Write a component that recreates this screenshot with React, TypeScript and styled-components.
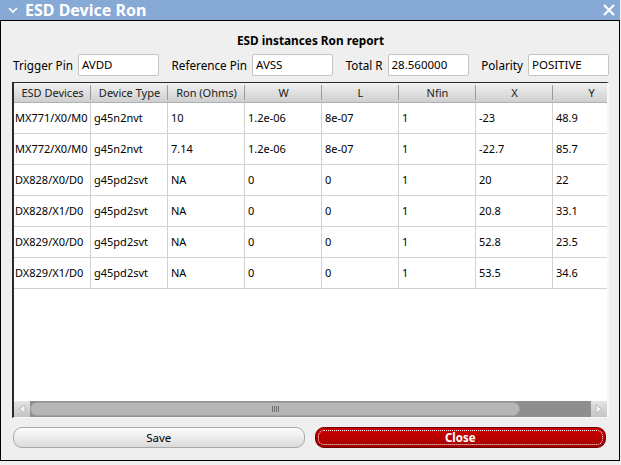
import styled, { createGlobalStyle } from "styled-components";

const GlobalStyle = createGlobalStyle`
  html, body {
    margin: 0;
    padding: 0;
    background: #efefef;
  }
  body {
    font-family: "Noto Sans", "Open Sans", "DejaVu Sans", sans-serif;
    font-size: 11px;
    color: #000;
  }
`;

interface Field {
  label: string;
  value: string;
}

const fields: Field[] = [
  { label: "Trigger Pin", value: "AVDD" },
  { label: "Reference Pin", value: "AVSS" },
  { label: "Total R", value: "28.560000" },
  { label: "Polarity", value: "POSITIVE" },
];

const columns = ["ESD Devices", "Device Type", "Ron (Ohms)", "W", "L", "Nfin", "X", "Y"];

const rows: string[][] = [
  ["MX771/X0/M0", "g45n2nvt", "10", "1.2e-06", "8e-07", "1", "-23", "48.9"],
  ["MX772/X0/M0", "g45n2nvt", "7.14", "1.2e-06", "8e-07", "1", "-22.7", "85.7"],
  ["DX828/X0/D0", "g45pd2svt", "NA", "0", "0", "1", "20", "22"],
  ["DX828/X1/D0", "g45pd2svt", "NA", "0", "0", "1", "20.8", "33.1"],
  ["DX829/X0/D0", "g45pd2svt", "NA", "0", "0", "1", "52.8", "23.5"],
  ["DX829/X1/D0", "g45pd2svt", "NA", "0", "0", "1", "53.5", "34.6"],
];

const Window = styled.div`
  width: 620px;
  height: 465px;
  display: flex;
  flex-direction: column;
`;

const TitleBar = styled.div`
  height: 20px;
  background: #87a9d6;
  border-bottom: 1px solid #000;
  display: flex;
  align-items: center;
  padding: 0 5px 0 8px;
  color: #fff;
`;

const Title = styled.span`
  flex: 1;
  margin-left: 7px;
  font-size: 16px;
  font-weight: bold;
  line-height: 20px;
`;

const Body = styled.div`
  flex: 1;
  display: flex;
  flex-direction: column;
  border-left: 1px solid #000;
  border-right: 1px solid #000;
  border-bottom: 1px solid #000;
  margin-bottom: 4px;
  padding: 12px 10px 12px 11px;
`;

const Heading = styled.div`
  text-align: center;
  font-size: 11.8px;
  font-weight: bold;
  line-height: 14px;
  height: 14px;
`;

const FieldRow = styled.div`
  display: flex;
  justify-content: space-between;
  margin: 7px 0 6px 1px;
  font-size: 11.7px;
`;

const FieldGroup = styled.label`
  display: flex;
  align-items: center;
  gap: 5px;
`;

const Input = styled.div`
  width: 76px;
  height: 20px;
  border: 1px solid #c4c4c4;
  border-radius: 2px;
  background: #fff;
  line-height: 20px;
  padding-left: 3px;
  font-size: 11.5px;
  box-sizing: content-box;
`;

const TableFrame = styled.div`
  width: 593px;
  height: 334px;
  display: flex;
  flex-direction: column;
  border-top: 1px solid #2a2a2a;
  border-left: 2px solid #2a2a2a;
  border-right: 2px solid #f8f8f8;
  border-bottom: 1px solid #f8f8f8;
`;

const Viewport = styled.div`
  flex: 1;
  overflow: hidden;
  background: #fff;
`;

const Grid = styled.div`
  display: grid;
  grid-template-columns: repeat(${columns.length}, 77px);
  width: ${columns.length * 77}px;
`;

const HeaderCell = styled.div`
  position: relative;
  height: 19px;
  line-height: 19px;
  text-align: center;
  color: #1a1a1a;
  background: linear-gradient(#f1f1f1, #cfcfcf);
  border-bottom: 1px solid #b0b0b0;
  &::after {
    content: "";
    position: absolute;
    right: 0;
    top: 2px;
    bottom: 2px;
    width: 1px;
    background: #9a9a9a;
  }
`;

const Cell = styled.div<{ $first?: boolean }>`
  height: 30px;
  line-height: 30px;
  padding-left: ${(p) => (p.$first ? "1px" : "3px")};
  border-right: 1px solid #d2d2d2;
  border-bottom: 1px solid #d2d2d2;
  white-space: nowrap;
  overflow: hidden;
`;

const ScrollBar = styled.div`
  height: 16px;
  display: flex;
  background: #8e8e8e;
`;

const ArrowButton = styled.div`
  width: 16px;
  height: 16px;
  background: linear-gradient(#e4e4e4, #c4c4c4);
  display: flex;
  align-items: center;
  justify-content: center;
`;

const Trough = styled.div`
  flex: 1;
  display: flex;
`;

const Thumb = styled.div`
  width: 490px;
  height: 14px;
  margin-top: 1px;
  background: #b6b6b6;
  border: 1px solid #a2a2a2;
  border-radius: 8px;
  box-sizing: border-box;
  display: flex;
  align-items: center;
  justify-content: center;
`;

const Grip = styled.div`
  width: 7px;
  height: 6px;
  background: repeating-linear-gradient(90deg, #6e6e6e 0 1px, transparent 1px 2px);
`;

const ButtonRow = styled.div`
  display: flex;
  gap: 10px;
  margin: 9px 0 0 1px;
  padding-right: 3px;
`;

const Button = styled.button<{ $primary?: boolean }>`
  flex: 1;
  height: 21px;
  border-radius: 9px;
  font-family: "Noto Sans", "Open Sans", "DejaVu Sans", sans-serif;
  font-size: 11.5px;
  padding: 0;
  border: 1px solid ${(p) => (p.$primary ? "#6d0000" : "#a9a9a9")};
  background: ${(p) =>
    p.$primary ? "linear-gradient(#cc0000, #a40000)" : "linear-gradient(#fdfdfd, #dadada)"};
  color: ${(p) => (p.$primary ? "#fff" : "#000")};
  font-weight: ${(p) => (p.$primary ? "bold" : "normal")};
  outline: ${(p) => (p.$primary ? "1px dotted #fff" : "none")};
  outline-offset: -4px;
`;

function App() {
  return (
    <>
      <GlobalStyle />
      <Window>
        <TitleBar>
          <svg width="10" height="7" viewBox="0 0 10 7">
            <polyline points="1,1 5,5 9,1" fill="none" stroke="#fff" strokeWidth="1.6" />
          </svg>
          <Title>ESD Device Ron</Title>
          <svg width="12" height="12" viewBox="0 0 12 12">
            <path d="M1 1 L11 11 M11 1 L1 11" stroke="#fff" strokeWidth="2.2" />
          </svg>
        </TitleBar>
        <Body>
          <Heading>ESD instances Ron report</Heading>
          <FieldRow>
            {fields.map((f) => (
              <FieldGroup key={f.label}>
                {f.label}
                <Input>{f.value}</Input>
              </FieldGroup>
            ))}
          </FieldRow>
          <TableFrame>
            <Viewport>
              <Grid>
                {columns.map((c) => (
                  <HeaderCell key={c}>{c}</HeaderCell>
                ))}
                {rows.map((r) =>
                  r.map((v, i) => (
                    <Cell key={r[0] + i} $first={i === 0}>
                      {v}
                    </Cell>
                  ))
                )}
              </Grid>
            </Viewport>
            <ScrollBar>
              <ArrowButton>
                <svg width="8" height="10" viewBox="0 0 8 10">
                  <polygon points="7,1 1,5 7,9" fill="#f4f4f4" stroke="#b0b0b0" strokeWidth="0.8" />
                </svg>
              </ArrowButton>
              <Trough>
                <Thumb>
                  <Grip />
                </Thumb>
              </Trough>
              <ArrowButton>
                <svg width="8" height="10" viewBox="0 0 8 10">
                  <polygon points="1,1 7,5 1,9" fill="#f4f4f4" stroke="#b0b0b0" strokeWidth="0.8" />
                </svg>
              </ArrowButton>
            </ScrollBar>
          </TableFrame>
          <ButtonRow>
            <Button>Save</Button>
            <Button $primary>Close</Button>
          </ButtonRow>
        </Body>
      </Window>
    </>
  );
}

export default App;
